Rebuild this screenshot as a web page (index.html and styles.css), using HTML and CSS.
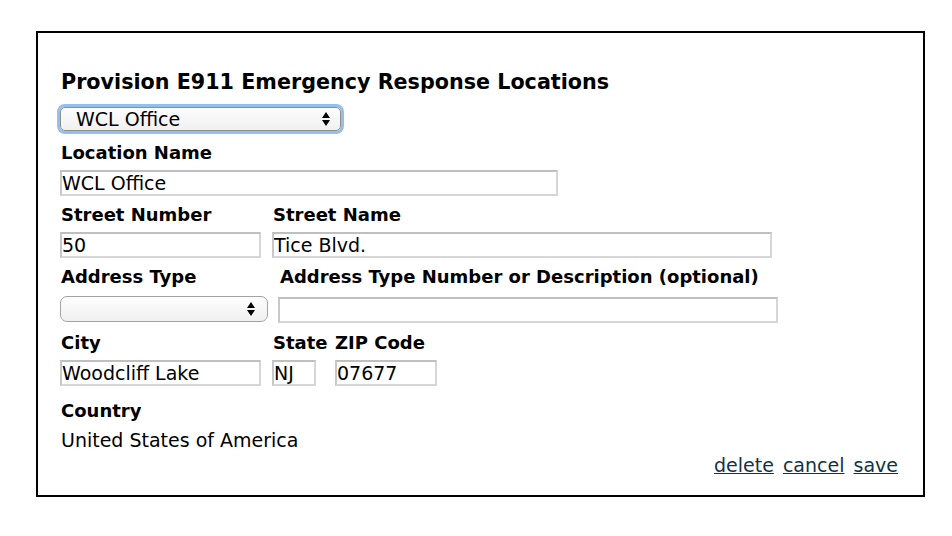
FILE: index.html
```html
<!DOCTYPE html>
<html lang="en">
<head>
    <meta charset="UTF-8">
    <title>Provision E911 Emergency Response Locations</title>
    <link rel="stylesheet" href="styles.css">
</head>
<body>

    <!-- Painel de localização E911 -->
    <div class="panel">
        <h1>Provision E911 Emergency Response Locations</h1>
        <div class="picker focused">
            <span>WCL Office</span>
            <svg class="arrows" width="8" height="14" viewBox="0 0 8 14"><path d="M4 0 L8 6 L0 6 Z M0 8 L8 8 L4 14 Z" fill="#000"/></svg>
        </div>

        <label class="lbl">Location Name</label>
        <div class="field w-loc">WCL Office</div>

        <div class="row">
            <div class="col">
                <label class="lbl">Street Number</label>
                <div class="field w-num">50</div>
            </div>
            <div class="col">
                <label class="lbl">Street Name</label>
                <div class="field w-street">Tice Blvd.</div>
            </div>
        </div>

        <div class="row">
            <div class="col">
                <label class="lbl">Address Type</label>
                <div class="picker w-type">
                    <span></span>
                    <svg class="arrows" width="8" height="14" viewBox="0 0 8 14"><path d="M4 0 L8 6 L0 6 Z M0 8 L8 8 L4 14 Z" fill="#000"/></svg>
                </div>
            </div>
            <div class="col col-desc">
                <label class="lbl">Address Type Number or Description (optional)</label>
                <div class="field w-desc"></div>
            </div>
        </div>

        <div class="row row-city">
            <div class="col">
                <label class="lbl">City</label>
                <div class="field w-num">Woodcliff Lake</div>
            </div>
            <div class="col col-state">
                <label class="lbl">State</label>
                <div class="field w-state">NJ</div>
            </div>
            <div class="col col-zip">
                <label class="lbl">ZIP Code</label>
                <div class="field w-zip">07677</div>
            </div>
        </div>

        <label class="lbl country">Country</label>
        <div class="country-name">United States of America</div>

        <div class="actions">
            <a href="#">delete</a>
            <a href="#">cancel</a>
            <a href="#">save</a>
        </div>
    </div>

</body>
</html>
```

FILE: styles.css
```css
body {
    margin: 0;
    font-family: "DejaVu Sans", Verdana, sans-serif;
    color: #000;
    background: #fff;
}
.panel {
    margin: 31px 0 0 36px;
    width: 841px;
    height: 425px;
    border: 2px solid #000;
    padding: 37px 22px 0 22px;
}
h1 {
    font-size: 20.7px;
    font-weight: bold;
    margin: 0 0 13px 1px;
    line-height: 24px;
}
.lbl {
    display: block;
    font-weight: bold;
    font-size: 18px;
    line-height: 22px;
    margin: 0 0 6px 1px;
    white-space: nowrap;
}
.row {
    display: flex;
    gap: 11px;
}
.col {
    display: flex;
    flex-direction: column;
}
.col-desc {
    margin-left: -1px;
}
.col-desc .lbl {
    margin-left: 2px;
}
.col-desc .field {
    margin-top: 3px;
}
.row-city .lbl {
    margin-top: 1px;
}
.col-state {
    width: 44px;
}
.col-zip {
    margin-left: 7px;
}
.col-zip .field {
    margin-left: 1px;
}
.field {
    box-sizing: border-box;
    height: 26px;
    border: 2px solid #d6d6d6;
    border-top-color: #bfbfbf;
    border-left-color: #c8c8c8;
    font-size: 19px;
    line-height: 22px;
    padding: 0;
    margin-bottom: 8px;
    white-space: nowrap;
    overflow: hidden;
}
.w-loc { width: 498px; }
.w-num { width: 201px; }
.w-street { width: 500px; }
.w-desc { width: 500px; }
.w-state { width: 44px; }
.w-zip { width: 102px; }

.picker {
    box-sizing: border-box;
    display: flex;
    justify-content: space-between;
    align-items: center;
    height: 24px;
    border: 1px solid #8e8e8e;
    border-radius: 5px;
    background: linear-gradient(#fdfdfd, #f0f0f0);
    font-size: 19px;
    padding: 0 10px 0 15px;
}
.picker.focused {
    width: 281px;
    margin: 0 0 11px 0;
    box-shadow: 0 0 0 3px #93bfe9;
}
.w-type {
    width: 208px;
    height: 26px;
    margin: 2px 0 8px 0;
    border-color: #a3a3a3;
    border-radius: 7px;
    padding-right: 12px;
}
.arrows {
    display: block;
}
.country {
    margin-top: 6px;
}
.country-name {
    font-size: 19px;
    line-height: 22px;
    margin: 7px 0 0 1px;
}
.actions {
    text-align: right;
    margin: 3px 3px 0 0;
    font-size: 19px;
    line-height: 22px;
}
.actions a {
    color: #0f3447;
    text-decoration: underline;
    margin-left: 3px;
}
```
